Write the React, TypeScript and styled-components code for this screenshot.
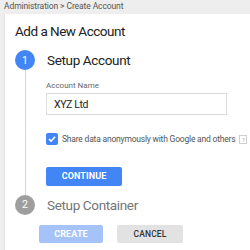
import React from "react";
import styled, { createGlobalStyle } from "styled-components";

const Global = createGlobalStyle`
  html, body { margin: 0; padding: 0; background: #eeeeee; }
  body { font-family: Roboto, "Liberation Sans", Arial, sans-serif; }
  * { box-sizing: border-box; }
`;

const Page = styled.div`
  width: 250px;
  height: 250px;
  overflow: hidden;
  display: flex;
  flex-direction: column;
  background: #eeeeee;
`;

const Breadcrumb = styled.div`
  height: 14px;
  line-height: 13px;
  padding-left: 4px;
  font-size: 8.5px;
  letter-spacing: -0.1px;
  color: #555;
  white-space: nowrap;
`;

const Card = styled.div`
  flex: 1;
  margin-left: 4px;
  background: #fff;
  border-left: 1px solid #e2e2e2;
  padding: 7px 0 0 10px;
`;

const Title = styled.h1`
  margin: 0;
  font-size: 13.5px;
  font-weight: 400;
  letter-spacing: -0.5px;
  line-height: 20px;
  color: #222;
  white-space: nowrap;
`;

const StepHeader = styled.div<{ $top: number }>`
  display: flex;
  align-items: center;
  gap: 12px;
  margin-top: ${(p) => p.$top}px;
  height: 20px;
`;

const Circle = styled.div<{ $active?: boolean }>`
  width: 20px;
  height: 20px;
  border-radius: 50%;
  background: ${(p) => (p.$active ? "#4285f4" : "#9e9e9e")};
  color: #fff;
  font-size: 10.5px;
  display: flex;
  align-items: center;
  justify-content: center;
  flex: none;
`;

const StepTitle = styled.div<{ $muted?: boolean }>`
  font-size: 13.5px;
  letter-spacing: -0.35px;
  color: ${(p) => (p.$muted ? "#757575" : "#222")};
  white-space: nowrap;
`;

const StepBody = styled.div`
  display: flex;
`;

const Rail = styled.div`
  width: 20px;
  flex: none;
  display: flex;
  justify-content: center;
  &::before {
    content: "";
    width: 1px;
    background: #d6d6d6;
  }
`;

const BodyContent = styled.div`
  padding: 10px 0 9px 11px;
  display: flex;
  flex-direction: column;
  align-items: flex-start;
`;

const Label = styled.label`
  font-size: 8px;
  line-height: 11px;
  color: #666;
  margin-bottom: 2px;
`;

const Input = styled.div`
  width: 181px;
  height: 22px;
  border: 1px solid #dcdcdc;
  padding-left: 7px;
  display: flex;
  align-items: center;
  font-size: 10.5px;
  letter-spacing: -0.4px;
  color: #222;
`;

const CheckRow = styled.div`
  margin-top: 18px;
  display: flex;
  align-items: center;
  height: 12px;
  white-space: nowrap;
`;

const Box = styled.div`
  width: 12px;
  height: 12px;
  border-radius: 2px;
  background: #4285f4;
  display: flex;
  align-items: center;
  justify-content: center;
  flex: none;
`;

const CheckText = styled.span`
  margin-left: 4px;
  font-size: 8.5px;
  letter-spacing: -0.2px;
  color: #555;
`;

const Help = styled.span`
  margin-left: 4px;
  width: 8px;
  height: 9px;
  border: 1px solid #d0d0d0;
  font-size: 6px;
  line-height: 7px;
  color: #aaa;
  text-align: center;
  flex: none;
`;

const Button = styled.button<{ $variant: "primary" | "disabled" | "plain"; $w: number }>`
  width: ${(p) => p.$w}px;
  height: ${(p) => (p.$variant === "primary" ? 19 : 18)}px;
  border: none;
  border-radius: 2px;
  padding: 0;
  font-family: inherit;
  font-size: ${(p) => (p.$variant === "plain" ? 8.5 : 9)}px;
  font-weight: ${(p) => (p.$variant === "plain" ? 500 : 700)};
  letter-spacing: 0.1px;
  background: ${(p) =>
    p.$variant === "primary" ? "#4285f4" : p.$variant === "disabled" ? "#a5c3f8" : "#e2e2e2"};
  color: ${(p) => (p.$variant === "plain" ? "#333" : "#fff")};
`;

const ContinueWrap = styled.div`
  margin-top: 19px;
`;

const Actions = styled.div`
  margin-top: 10px;
  padding-left: 24px;
  display: flex;
  gap: 14px;
`;

export default function App() {
  return (
    <Page>
      <Global />
      <Breadcrumb>Administration &gt; Create Account</Breadcrumb>
      <Card>
        <Title>Add a New Account</Title>
        <StepHeader $top={9}>
          <Circle $active>1</Circle>
          <StepTitle>Setup Account</StepTitle>
        </StepHeader>
        <StepBody>
          <Rail />
          <BodyContent>
            <Label>Account Name</Label>
            <Input>XYZ Ltd</Input>
            <CheckRow>
              <Box>
                <svg width="10" height="10" viewBox="0 0 10 10">
                  <path d="M2 5.2 L4.1 7.2 L8 2.8" fill="none" stroke="#fff" strokeWidth="1.6" />
                </svg>
              </Box>
              <CheckText>Share data anonymously with Google and others</CheckText>
              <Help>?</Help>
            </CheckRow>
            <ContinueWrap>
              <Button $variant="primary" $w={76}>CONTINUE</Button>
            </ContinueWrap>
          </BodyContent>
        </StepBody>
        <StepHeader $top={0}>
          <Circle>2</Circle>
          <StepTitle $muted>Setup Container</StepTitle>
        </StepHeader>
        <Actions>
          <Button $variant="disabled" $w={64}>CREATE</Button>
          <Button $variant="plain" $w={66}>CANCEL</Button>
        </Actions>
      </Card>
    </Page>
  );
}
